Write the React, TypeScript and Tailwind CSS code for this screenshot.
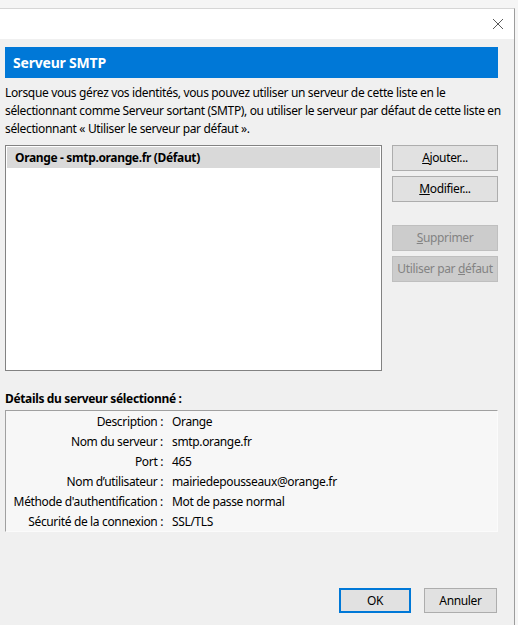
import React from 'react';

const font = { fontFamily: '"Noto Sans", "Open Sans", Arial, sans-serif' };

const details: [string, string][] = [
  ['Description :', 'Orange'],
  ['Nom du serveur :', 'smtp.orange.fr'],
  ['Port :', '465'],
  ["Nom d\u2019utilisateur :", 'mairiedepousseaux@orange.fr'],
  ["Méthode d'authentification :", 'Mot de passe normal'],
  ['Sécurité de la connexion :', 'SSL/TLS'],
];

const SideButton: React.FC<{ disabled?: boolean; children: React.ReactNode }> = ({ disabled, children }) => (
  <button
    type="button"
    className={
      disabled
        ? 'h-[26px] w-full border border-[#bfbfbf] bg-[#cccccc] text-[12px] tracking-[-0.35px] whitespace-nowrap text-[#838383]'
        : 'h-[26px] w-full border border-[#adadad] bg-[#e1e1e1] text-[12px] tracking-[-0.35px] whitespace-nowrap text-black'
    }
  >
    {children}
  </button>
);

const App: React.FC = () => {
  return (
    <div className="h-[625px] w-[518px] overflow-hidden bg-[#f5f5f5] pt-[8px]" style={font}>
      <div className="flex h-[617px] w-[515px] flex-col border-t border-r border-t-[#d6d6d6] border-r-[#9c9c9c]">
        {/* title bar */}
        <div className="flex h-[30px] items-center justify-end bg-white pr-[10px]">
          <svg width="12" height="12" viewBox="0 0 12 12" className="mt-[-1px]">
            <path d="M1 1 L11 11 M11 1 L1 11" stroke="#5a5a5a" strokeWidth="1" fill="none" />
          </svg>
        </div>

        <div className="flex flex-1 flex-col bg-[#f0f0f0] pt-[8px] pl-[5px] pr-[16px] text-[12px] tracking-[-0.35px] text-black">
          <div className="flex h-[31px] items-center bg-[#0078d7] pl-[8px] text-[14px] font-bold tracking-[-0.2px] text-white">
            Serveur SMTP
          </div>

          <p className="mt-[6px] leading-[18px] whitespace-nowrap">
            Lorsque vous gérez vos identités, vous pouvez utiliser un serveur de cette liste en le
            <br />
            sélectionnant comme Serveur sortant (SMTP), ou utiliser le serveur par défaut de cette liste en
            <br />
            sélectionnant « Utiliser le serveur par défaut ».
          </p>

          <div className="mt-[7px] flex">
            <div className="h-[226px] w-[377px] border border-[#828282] bg-white p-[1px]">
              <div className="flex h-[21px] items-center bg-[#d9d9d9] pl-[8px] font-bold">
                Orange - smtp.orange.fr (Défaut)
              </div>
            </div>
            <div className="ml-[10px] flex w-[106px] flex-col">
              <SideButton>
                <span className="underline">A</span>jouter...
              </SideButton>
              <div className="mt-[5px]">
                <SideButton>
                  <span className="underline">M</span>odifier...
                </SideButton>
              </div>
              <div className="mt-[23px]">
                <SideButton disabled>
                  <span className="underline">S</span>upprimer
                </SideButton>
              </div>
              <div className="mt-[5px]">
                <SideButton disabled>
                  Utiliser par <span className="underline">d</span>éfaut
                </SideButton>
              </div>
            </div>
          </div>

          <div className="mt-[19px] leading-[18px] font-bold">Détails du serveur sélectionné :</div>

          <div className="mt-[2px] h-[122px] border border-t-[#a0a0a0] border-l-[#a0a0a0] border-r-[#fbfbfb] border-b-[#fbfbfb] bg-[#f7f7f7] pt-[1px]">
            {details.map(([k, v]) => (
              <div key={k} className="flex h-[20px] items-center">
                <div className="w-[157px] text-right whitespace-nowrap">{k}</div>
                <div className="ml-[9px]">{v}</div>
              </div>
            ))}
          </div>

          <div className="mt-auto mb-[12px] flex justify-end gap-[13px] pr-[1px]">
            <button
              type="button"
              className="h-[25px] w-[72px] border-2 border-[#0078d7] bg-[#e1e1e1] text-[12px] text-black"
            >
              OK
            </button>
            <button
              type="button"
              className="h-[25px] w-[73px] border border-[#adadad] bg-[#e1e1e1] text-[12px] text-black"
            >
              Annuler
            </button>
          </div>
        </div>
      </div>
    </div>
  );
};

export default App;
